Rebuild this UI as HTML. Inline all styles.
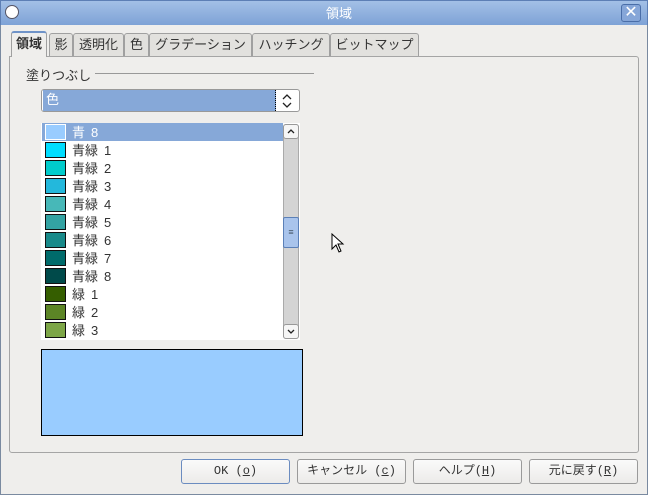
<!DOCTYPE html><html><head><meta charset="utf-8"><style>
*{box-sizing:border-box;margin:0;padding:0}
body{width:648px;height:495px;background:#efeeec;font-family:"Liberation Sans","Noto Sans CJK JP",sans-serif;font-size:13px;color:#222;position:relative;overflow:hidden}
.a{position:absolute}
.title{left:0;top:0;width:648px;height:25px;background:linear-gradient(#a3c0e6,#7ea2d6);border:1px solid #5d7fb5;border-bottom:none;color:#fff;text-align:center;line-height:25px;font-size:13px;padding-left:30px}
.win{left:0;top:25px;width:648px;height:470px;border:1px solid #7a8aa0;border-top:none}
.tab{top:33px;height:23px;border:1px solid #a0a0a0;border-bottom:none;border-radius:3px 3px 0 0;background:#e2e1de;line-height:22px;text-align:center;color:#333}
.panel{left:9px;top:56px;width:630px;height:397px;border:1px solid #a5a5a5;background:#efeeec;border-radius:0 3px 3px 3px}
.row{left:42px;width:241px;height:18px;line-height:19px}
.sw{position:absolute;left:3px;top:1px;width:21px;height:16px;border:1px solid #111}
.row span{position:absolute;left:30px;color:#333}
.row b{font-weight:normal;margin-left:6px}
.btn{top:459px;height:25px;border:1px solid #9a9a9a;border-radius:3px;background:linear-gradient(#fafafa,#ecebe9);text-align:center;line-height:23px;font-size:12px;font-family:"Liberation Mono","Noto Sans CJK JP",monospace;color:#333}
</style></head><body>
<div class="a title">領域</div>
<div class="a" style="left:5px;top:5px;width:14px;height:14px;border-radius:50%;background:#fff;border:1px solid #556"></div>
<div class="a" style="left:621px;top:4px;width:20px;height:18px;border:1px solid #4a6ea8;border-radius:3px;background:#86a6d8;color:#fff;text-align:center;line-height:16px;font-size:16px">✕</div>
<div class="a win"></div>
<div class="a panel"></div>
<div class="a tab" style="left:11px;width:36px;top:31px;height:26px;background:#efeeec;font-weight:bold;border-top:2px solid #6f93c8">領域</div>
<div class="a tab" style="left:49px;width:24px">影</div>
<div class="a tab" style="left:73px;width:51px">透明化</div>
<div class="a tab" style="left:124px;width:25px">色</div>
<div class="a tab" style="left:149px;width:103px">グラデーション</div>
<div class="a tab" style="left:252px;width:78px">ハッチング</div>
<div class="a tab" style="left:330px;width:89px">ビットマップ</div>
<div class="a" style="left:26px;top:65px;color:#333">塗りつぶし</div>
<div class="a" style="left:95px;top:73px;width:219px;height:1px;background:#999"></div>
<div class="a" style="left:41px;top:89px;width:259px;height:23px;border:1px solid #999;border-radius:3px;background:#fff"></div>
<div class="a" style="left:43px;top:90px;width:233px;height:21px;background:#86a8d8;color:#fff;line-height:20px;padding-left:3px;border-right:1px dotted #000">色</div>
<svg class="a" style="left:280px;top:93px" width="14" height="16"><path d="M3 6 L7 2 L11 6 M3 10 L7 14 L11 10" fill="none" stroke="#222" stroke-width="1.3"/></svg>
<div class="a" style="left:41px;top:123px;width:259px;height:217px;background:#fff"></div>
<div class="a row" style="top:123px;background:#86a8d8"><div class="sw" style="background:#99ccff;border-color:#fff"></div><span style="color:#fff">青<b>8</b></span></div>
<div class="a row" style="top:141px"><div class="sw" style="background:#00ddff"></div><span>青緑<b>1</b></span></div>
<div class="a row" style="top:159px"><div class="sw" style="background:#00cccc"></div><span>青緑<b>2</b></span></div>
<div class="a row" style="top:177px"><div class="sw" style="background:#23b8dc"></div><span>青緑<b>3</b></span></div>
<div class="a row" style="top:195px"><div class="sw" style="background:#47b8b8"></div><span>青緑<b>4</b></span></div>
<div class="a row" style="top:213px"><div class="sw" style="background:#33a3a3"></div><span>青緑<b>5</b></span></div>
<div class="a row" style="top:231px"><div class="sw" style="background:#198a8a"></div><span>青緑<b>6</b></span></div>
<div class="a row" style="top:249px"><div class="sw" style="background:#006b6b"></div><span>青緑<b>7</b></span></div>
<div class="a row" style="top:267px"><div class="sw" style="background:#004a4a"></div><span>青緑<b>8</b></span></div>
<div class="a row" style="top:285px"><div class="sw" style="background:#355e00"></div><span>緑<b>1</b></span></div>
<div class="a row" style="top:303px"><div class="sw" style="background:#5c8526"></div><span>緑<b>2</b></span></div>
<div class="a row" style="top:321px"><div class="sw" style="background:#7da647"></div><span>緑<b>3</b></span></div>
<div class="a" style="left:283px;top:124px;width:16px;height:215px;background:#d4d4d4;border:1px solid #aaa;border-radius:3px"></div>
<div class="a" style="left:283px;top:124px;width:16px;height:15px;background:#f6f6f6;border:1px solid #999;border-radius:3px"></div>
<svg class="a" style="left:286px;top:127px" width="10" height="9"><path d="M2 6 L5 3 L8 6" fill="none" stroke="#222" stroke-width="1.3"/></svg>
<div class="a" style="left:283px;top:324px;width:16px;height:15px;background:#f6f6f6;border:1px solid #999;border-radius:3px"></div>
<svg class="a" style="left:286px;top:327px" width="10" height="9"><path d="M2 3 L5 6 L8 3" fill="none" stroke="#222" stroke-width="1.3"/></svg>
<div class="a" style="left:283px;top:217px;width:16px;height:31px;background:#a9c4ec;border:1px solid #5b80b8;border-radius:2px;font-size:9px;text-align:center;line-height:29px;color:#456">≡</div>
<div class="a" style="left:41px;top:349px;width:262px;height:87px;background:#99ccff;border:1px solid #000"></div>
<svg class="a" style="left:331px;top:233px" width="14" height="20"><path d="M1 1 L1 16 L5 12 L8 19 L10 18 L7 11 L12 11 Z" fill="#fff" stroke="#000"/></svg>
<div class="a btn" style="left:181px;width:109px;border-color:#6b8cc0">OK (<u>o</u>)</div>
<div class="a btn" style="left:297px;width:109px">キャンセル (<u>c</u>)</div>
<div class="a btn" style="left:413px;width:109px">ヘルプ(<u>H</u>)</div>
<div class="a btn" style="left:529px;width:109px">元に戻す(<u>R</u>)</div>
</body></html>
